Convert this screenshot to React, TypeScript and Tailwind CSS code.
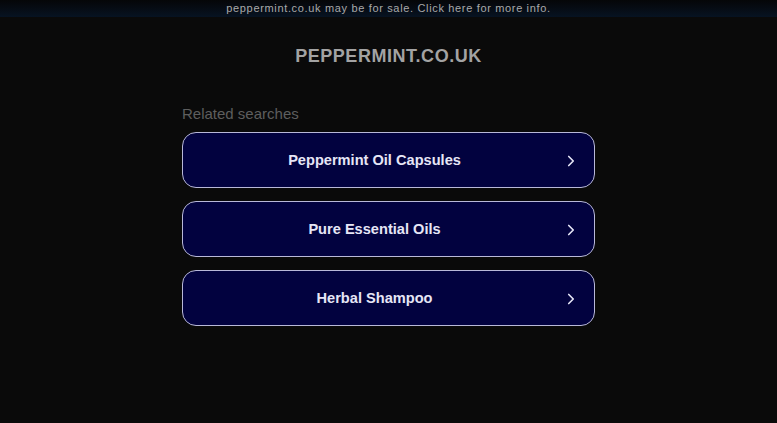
import { ChevronRight } from 'lucide-react';

const searches = ['Peppermint Oil Capsules', 'Pure Essential Oils', 'Herbal Shampoo'];

export default function App() {
  return (
    <div className="min-h-[423px] bg-[#0a0a0a] font-['Liberation_Sans',Arial,sans-serif]">
      <div className="flex h-[17px] items-center justify-center bg-gradient-to-b from-[#050608] to-[#071322] text-[11px] tracking-[0.06em] text-[#a9a9a9]">
        peppermint.co.uk may be for sale. Click here for more info.
      </div>

      <h1 className="mt-[28px] text-center text-[18px] font-bold leading-[22px] tracking-[0.03em] text-[#a3a3a3]">
        PEPPERMINT.CO.UK
      </h1>

      <div className="mx-auto mt-[38px] w-[413px]">
        <p className="text-[15px] leading-[18px] text-[#5e5e5e]">Related searches</p>
        <ul className="mt-[9px] flex flex-col gap-[13px]">
          {searches.map((label) => (
            <li key={label}>
              <a
                href="#"
                className="relative flex h-[56px] items-center justify-center rounded-[14px] border border-[#b8b8d8] bg-[#02023f] pt-[1px] pr-[28px] text-[14.6px] font-bold text-[#e6e6f6]"
              >
                {label}
                <ChevronRight className="absolute right-[14px] h-[18px] w-[18px]" strokeWidth={2.2} />
              </a>
            </li>
          ))}
        </ul>
      </div>
    </div>
  );
}
